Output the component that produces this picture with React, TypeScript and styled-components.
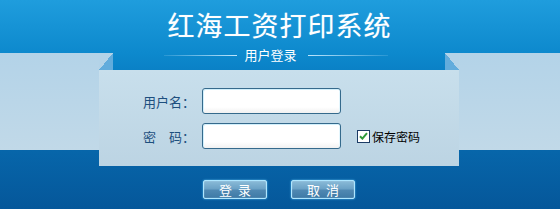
import React from "react";
import styled, { createGlobalStyle } from "styled-components";

const GlobalStyle = createGlobalStyle`
  html, body {
    margin: 0;
    padding: 0;
  }
  body {
    font-family: "Noto Sans CJK SC", "Liberation Sans", sans-serif;
  }
`;

const StyledPage = styled.div`
  width: 560px;
  height: 209px;
  overflow: hidden;
  display: flex;
  background: linear-gradient(
    to bottom,
    #1f9ddd 0,
    #0d89cd 53px,
    #0a81c6 70px,
    #0868ac 70px,
    #0766aa 150px,
    #05579a 209px
  );
`;

const StyledSideBand = styled.div<{ $width: number }>`
  width: ${(p) => p.$width}px;
  flex: none;
  margin-top: 53px;
  height: 97px;
  background: linear-gradient(to bottom, #b3d3e8, #c1d9e8);
`;

const StyledCenter = styled.div`
  width: 360px;
  flex: none;
  display: flex;
  flex-direction: column;
`;

const StyledBanner = styled.div`
  position: relative;
  height: 70px;
  box-sizing: border-box;
  padding-top: 10px;
  display: flex;
  flex-direction: column;
  align-items: center;
  color: #fff;

  /* folded corners of the panel */
  &::before,
  &::after {
    content: "";
    position: absolute;
    bottom: 0;
    width: 14px;
    height: 17px;
  }
  &::before {
    left: 0;
    background: linear-gradient(to bottom right, #b3d3e8 50%, #62acdc 50%);
  }
  &::after {
    right: 0;
    background: linear-gradient(to bottom left, #b3d3e8 50%, #62acdc 50%);
  }
`;

const StyledTitle = styled.h1`
  margin: 0;
  font-size: 27px;
  line-height: 30px;
  font-weight: 400;
  letter-spacing: 1px;
  padding-left: 1px;
  text-shadow: 0 0 1px rgba(255, 255, 255, 0.4);
`;

const StyledSubtitleRow = styled.div`
  margin-top: 8px;
  display: flex;
  align-items: center;
  font-size: 13px;
  line-height: 14px;
  margin-right: 6px;
`;

const StyledRule = styled.span<{ $dir: "left" | "right"; $width: number }>`
  width: ${(p) => p.$width}px;
  height: 1px;
  margin: ${(p) => (p.$dir === "left" ? "0 7px 0 0" : "0 0 0 11px")};
  background: linear-gradient(
    to ${(p) => p.$dir},
    rgba(200, 235, 255, 0.95),
    rgba(200, 235, 255, 0.15)
  );
`;

const StyledPanel = styled.div`
  height: 96px;
  box-sizing: border-box;
  padding: 18px 0 0 44px;
  background: linear-gradient(to bottom, #c8dfec, #bcd4e3);
  display: flex;
  flex-direction: column;
  gap: 9px;
`;

const StyledRow = styled.div`
  display: flex;
  align-items: center;
`;

const StyledLabel = styled.label`
  width: 59px;
  font-size: 13px;
  color: #1d4f7e;
  white-space: pre;
`;

const StyledInput = styled.input`
  width: 139px;
  height: 26px;
  box-sizing: border-box;
  border: 1px solid #356a8c;
  border-radius: 3px;
  background: linear-gradient(to bottom, #fff 75%, #f1f1f1);
  box-shadow: inset 1px 1px 0 #d2f0fc, inset -1px 0 0 #e4f6fd;
  outline: none;
`;

const StyledRemember = styled.label`
  margin-left: 16px;
  display: flex;
  align-items: center;
  gap: 2px;
  font-size: 12px;
  color: #000;
`;

const StyledCheck = styled.span`
  width: 11px;
  height: 11px;
  border: 1px solid #1c3c66;
  background: #fff;
  display: flex;
  align-items: center;
  justify-content: center;
`;

const StyledActions = styled.div`
  display: flex;
  justify-content: center;
  gap: 24px;
  padding-top: 14px;
`;

const StyledButton = styled.button`
  width: 64px;
  height: 19px;
  padding: 0;
  border: 1px solid #aee6ff;
  border-radius: 2px;
  background: linear-gradient(to bottom, #8abbd8 0, #6ca2c6 45%, #4f88b2 55%, #3e7aa6 100%);
  box-shadow: 0 0 2px #62c6f5, inset 0 0 1px #d8f6ff;
  color: #fff;
  font-family: "Noto Sans CJK SC", sans-serif;
  font-size: 13px;
  line-height: 17px;
  letter-spacing: 6px;
  text-indent: 6px;
  cursor: pointer;
`;

const App = () => {
  return (
    <>
      <GlobalStyle />
      <StyledPage>
        <StyledSideBand $width={99} />
        <StyledCenter>
          <StyledBanner>
            <StyledTitle>红海工资打印系统</StyledTitle>
            <StyledSubtitleRow>
              <StyledRule $dir="left" $width={73} />
              <span>用户登录</span>
              <StyledRule $dir="right" $width={80} />
            </StyledSubtitleRow>
          </StyledBanner>
          <StyledPanel>
            <StyledRow>
              <StyledLabel>用户名：</StyledLabel>
              <StyledInput type="text" />
            </StyledRow>
            <StyledRow>
              <StyledLabel>密　码：</StyledLabel>
              <StyledInput type="password" />
              <StyledRemember>
                <StyledCheck>
                  <svg width="9" height="8" viewBox="0 0 9 8">
                    <path d="M1 4.2 L3.4 6.6 L8 1.2" fill="none" stroke="#2f9a3a" strokeWidth="2" />
                  </svg>
                </StyledCheck>
                保存密码
              </StyledRemember>
            </StyledRow>
          </StyledPanel>
          <StyledActions>
            <StyledButton>登录</StyledButton>
            <StyledButton>取消</StyledButton>
          </StyledActions>
        </StyledCenter>
        <StyledSideBand $width={101} />
      </StyledPage>
    </>
  );
};

export default App;
